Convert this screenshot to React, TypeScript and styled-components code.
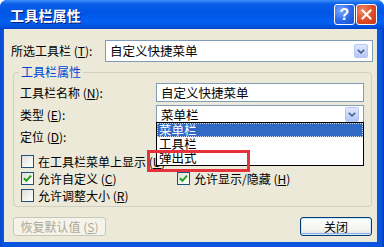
import React from 'react';
import styled, { createGlobalStyle } from 'styled-components';

const Global = createGlobalStyle`
  html, body { margin: 0; padding: 0; background: #ffffff; }
  body { font-family: "Noto Sans CJK SC", "Noto Sans", sans-serif; font-size: 12px; color: #000; }
  * { box-sizing: border-box; }
`;

const Window = styled.div`
  width: 384px;
  height: 247px;
  display: flex;
  flex-direction: column;
  border-radius: 7px 7px 0 0;
  overflow: hidden;
  background: #0a4fd8;
`;

const TitleBar = styled.div`
  height: 29px;
  flex: none;
  display: flex;
  align-items: center;
  padding: 0 7px 0 10px;
  background: linear-gradient(
    to bottom,
    #3d8ef8 0px,
    #0a5ee8 4px,
    #0055e5 12px,
    #0360f0 22px,
    #0150dc 27px,
    #0040c8 29px
  );
`;

const Title = styled.div`
  flex: 1;
  color: #fff;
  font-weight: bold;
  font-size: 14px;
  line-height: 16px;
  text-shadow: 1px 1px 0 #0a1a7a;
  letter-spacing: 0.2px;
`;

const CapButton = styled.div<{ $kind: 'help' | 'close' }>`
  width: 21px;
  height: 21px;
  margin-left: 1px;
  border: 1px solid #fff;
  border-radius: 3px;
  display: flex;
  align-items: center;
  justify-content: center;
  background: ${(p) =>
    p.$kind === 'close'
      ? 'radial-gradient(circle at 30% 30%, #f08a6a, #e04a22 55%, #c03a18)'
      : 'radial-gradient(circle at 30% 30%, #7aa8ff, #2a68ea 55%, #1a4fd0)'};
  color: #fff;
  font-family: "Liberation Sans", Arial, sans-serif;
  font-weight: bold;
  font-size: 16px;
  line-height: 1;
`;

const Frame = styled.div`
  flex: 1;
  display: flex;
  padding: 0 7px 5px 4px;
  background: linear-gradient(to right, #0a48d0 0, #0a55e0 3px, #0a55e0 calc(100% - 3px), #0038b8 100%);
`;

const Body = styled.div`
  flex: 1;
  display: flex;
  flex-direction: column;
  background: #ece9d8;
  padding: 11px 4px 5px 7px;
`;

const TopRow = styled.div`
  height: 22px;
  display: flex;
  align-items: center;
  justify-content: space-between;
`;

const Label = styled.span`
  line-height: 14px;
  white-space: nowrap;
`;

const Field = styled.div<{ $w: number }>`
  position: relative;
  width: ${(p) => p.$w}px;
  height: 100%;
  background: #fff;
  border: 1px solid #7f9db9;
  display: flex;
  align-items: center;
  padding-left: 4px;
  font-size: 12.5px;
  line-height: 14px;
  white-space: nowrap;
`;

const FieldText = styled.span`
  flex: 1;
`;

const ArrowBtn = styled.div<{ $inset: number }>`
  width: 14px;
  align-self: stretch;
  margin: ${(p) => p.$inset}px 4px ${(p) => p.$inset}px 0;
  border: 1px solid #b6c8f2;
  border-radius: 2px;
  background: linear-gradient(to bottom, #dfe8fd, #c3d4fb 60%, #b3c6f5);
  display: flex;
  align-items: center;
  justify-content: center;
`;

const Group = styled.div`
  position: relative;
  margin: 10px 1px 0 2px;
  border: 1px solid #d0d0bf;
  border-radius: 4px;
  padding: 10px 7px 4px 6px;
  display: flex;
  flex-direction: column;
`;

const Legend = styled.span`
  position: absolute;
  top: -8px;
  left: 5px;
  padding: 0 2px;
  background: #ece9d8;
  color: #0046d5;
  line-height: 14px;
`;

const FieldRow = styled.div`
  height: 19px;
  margin-bottom: 3px;
  display: flex;
  align-items: center;
  justify-content: space-between;
`;

const Checks = styled.div`
  margin-top: 6px;
  display: grid;
  grid-template-columns: 156px 1fr;
  row-gap: 4px;
`;

const CheckRow = styled.label<{ $span?: boolean }>`
  height: 13px;
  display: flex;
  align-items: center;
  margin-left: 1px;
  ${(p) => (p.$span ? 'grid-column: 1 / span 2;' : '')}
  white-space: nowrap;
  line-height: 14px;
`;

const Box = styled.span`
  width: 13px;
  height: 13px;
  flex: none;
  margin-right: 4px;
  border: 1px solid #1c5180;
  background: linear-gradient(135deg, #dcdcd7 0%, #f4f4f0 60%, #ffffff 100%);
  display: flex;
  align-items: center;
  justify-content: center;
`;

const List = styled.div`
  position: absolute;
  top: calc(100% - 1px);
  left: -1px;
  width: 208px;
  height: 44px;
  background: #fff;
  border: 1px solid #000;
  z-index: 3;
  display: flex;
  flex-direction: column;
`;

const Item = styled.div<{ $sel?: boolean }>`
  height: 14px;
  padding-left: 2px;
  display: flex;
  align-items: center;
  font-size: 12.5px;
  line-height: 14px;
  color: ${(p) => (p.$sel ? '#fff' : '#000')};
  background: ${(p) => (p.$sel ? '#316ac5' : 'transparent')};
  outline: ${(p) => (p.$sel ? '1px dotted #c8d8f0' : 'none')};
  outline-offset: -1px;
`;

const Mark = styled.div`
  position: absolute;
  left: -10px;
  top: 44px;
  width: 103px;
  height: 22px;
  border: 3px solid #e6333b;
  z-index: 4;
`;

const ButtonRow = styled.div`
  margin-top: 10px;
  height: 19px;
  display: flex;
  justify-content: space-between;
  padding: 0 1px 0 2px;
`;

const Button = styled.div<{ $disabled?: boolean; $w: number }>`
  width: ${(p) => p.$w}px;
  height: 100%;
  border-radius: 3px;
  display: flex;
  align-items: center;
  justify-content: center;
  line-height: 14px;
  white-space: nowrap;
  border: 1px solid ${(p) => (p.$disabled ? '#c9c7ba' : '#003c74')};
  color: ${(p) => (p.$disabled ? '#aca899' : '#000')};
  background: ${(p) =>
    p.$disabled ? '#f5f4ea' : 'linear-gradient(to bottom, #ffffff, #f3f3ef 70%, #e3e2db)'};
  box-shadow: ${(p) =>
    p.$disabled ? 'none' : 'inset 0 0 0 1px #cee7ff, inset 0 -1px 0 1px #8fb0ef'};
`;

const Chevron = () => (
  <svg width="8" height="5" viewBox="0 0 8 5">
    <path d="M0.8 0.8 L4 3.8 L7.2 0.8" fill="none" stroke="#4d6185" strokeWidth="1.6" />
  </svg>
);

const Tick = () => (
  <svg width="9" height="9" viewBox="0 0 9 9">
    <path d="M1 4.2 L3.4 6.8 L8 1.6" fill="none" stroke="#21a121" strokeWidth="2" />
  </svg>
);

const XGlyph = () => (
  <svg width="11" height="11" viewBox="0 0 11 11">
    <path d="M1.5 1.5 L9.5 9.5 M9.5 1.5 L1.5 9.5" stroke="#fff" strokeWidth="2" strokeLinecap="square" />
  </svg>
);

const Check: React.FC<{ checked?: boolean; span?: boolean; children: React.ReactNode }> = ({
  checked,
  span,
  children,
}) => (
  <CheckRow $span={span}>
    <Box>{checked ? <Tick /> : null}</Box>
    <Label>{children}</Label>
  </CheckRow>
);

export default function App() {
  return (
    <>
      <Global />
      <Window>
        <TitleBar>
          <Title>工具栏属性</Title>
          <CapButton $kind="help">?</CapButton>
          <CapButton $kind="close">
            <XGlyph />
          </CapButton>
        </TitleBar>
        <Frame>
          <Body>
            <TopRow>
              <Label>
                所选工具栏 (<u>T</u>):
              </Label>
              <Field $w={268}>
                <FieldText>自定义快捷菜单</FieldText>
                <ArrowBtn $inset={3}>
                  <Chevron />
                </ArrowBtn>
              </Field>
            </TopRow>
            <Group>
              <Legend>工具栏属性</Legend>
              <FieldRow>
                <Label>
                  工具栏名称 (<u>N</u>):
                </Label>
                <Field $w={208}>
                  <FieldText>自定义快捷菜单</FieldText>
                </Field>
              </FieldRow>
              <FieldRow>
                <Label>
                  类型 (<u>E</u>):
                </Label>
                <Field $w={208}>
                  <FieldText>菜单栏</FieldText>
                  <ArrowBtn $inset={1}>
                    <Chevron />
                  </ArrowBtn>
                  <List>
                    <Item $sel>菜单栏</Item>
                    <Item>工具栏</Item>
                    <Item>弹出式</Item>
                  </List>
                  <Mark />
                </Field>
              </FieldRow>
              <FieldRow>
                <Label>
                  定位 (<u>D</u>):
                </Label>
                <Field $w={208}>
                  <FieldText>顶部</FieldText>
                </Field>
              </FieldRow>
              <Checks>
                <Check span>
                  在工具栏菜单上显示 (<u>U</u>)
                </Check>
                <Check checked>
                  允许自定义 (<u>C</u>)
                </Check>
                <Check checked>
                  允许显示/隐藏 (<u>H</u>)
                </Check>
                <Check span>
                  允许调整大小 (<u>R</u>)
                </Check>
              </Checks>
            </Group>
            <ButtonRow>
              <Button $disabled $w={93}>
                恢复默认值 (<u>S</u>)
              </Button>
              <Button $w={72}>关闭</Button>
            </ButtonRow>
          </Body>
        </Frame>
      </Window>
    </>
  );
}
